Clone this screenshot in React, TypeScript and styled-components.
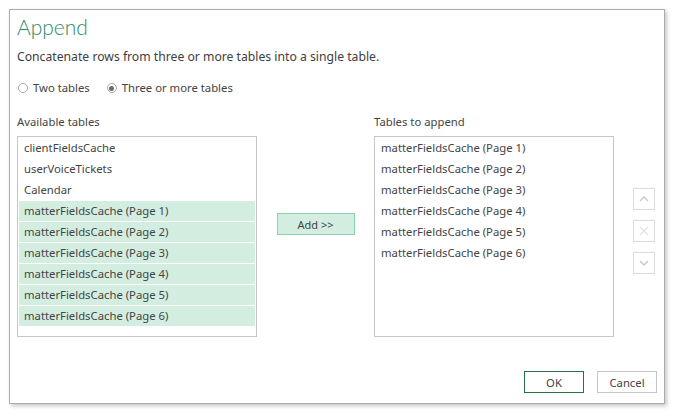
import React, { useState } from "react";
import styled, { createGlobalStyle } from "styled-components";

const GlobalStyle = createGlobalStyle`
  html, body {
    margin: 0;
    padding: 0;
    background: #ffffff;
  }
  body {
    font-family: "Noto Sans", "Open Sans", sans-serif;
    color: #444444;
  }
`;

const Page = styled.div`
  width: 675px;
  height: 413px;
  padding: 9px 0 0 9px;
  box-sizing: border-box;
`;

const Dialog = styled.div`
  width: 656px;
  height: 395px;
  box-sizing: border-box;
  border: 1px solid #ababab;
  box-shadow: 2px 2px 4px rgba(0, 0, 0, 0.22);
  background: #fff;
  padding: 3px 7px 10px 7px;
  display: flex;
  flex-direction: column;
`;

const Title = styled.h1`
  margin: 0;
  font-family: "Lato", "Noto Sans", sans-serif;
  font-weight: 300;
  font-size: 21px;
  line-height: 28px;
  color: #2f8a68;
`;

const Description = styled.p`
  margin: 8px 0 0 0;
  font-size: 12.2px;
  line-height: 16px;
  color: #404040;
`;

const RadioRow = styled.div`
  display: flex;
  gap: 16px;
  margin-top: 15px;
  height: 16px;
  align-items: center;
`;

const RadioLabel = styled.label`
  display: flex;
  align-items: center;
  gap: 5px;
  font-size: 11.3px;
  line-height: 16px;
  color: #444;
  cursor: pointer;
`;

const RadioDot = styled.span<{ checked: boolean }>`
  width: 10px;
  height: 10px;
  border-radius: 50%;
  border: 1px solid #a8a8a8;
  box-sizing: border-box;
  position: relative;
  margin-left: 1px;
  &::after {
    content: "";
    display: ${({ checked }) => (checked ? "block" : "none")};
    position: absolute;
    left: 1.5px;
    top: 1.5px;
    width: 5px;
    height: 5px;
    border-radius: 50%;
    background: #6a6a6a;
  }
`;

const Columns = styled.div`
  display: flex;
  margin-top: 18px;
  align-items: flex-start;
`;

const Column = styled.div`
  display: flex;
  flex-direction: column;
  gap: 6px;
`;

const ColumnLabel = styled.div`
  font-size: 11.3px;
  line-height: 16px;
  color: #444;
`;

const ListBox = styled.div`
  width: 240px;
  height: 201px;
  box-sizing: border-box;
  border: 1px solid #c6c6c6;
  padding: 1px;
  display: flex;
  flex-direction: column;
`;

const ListItem = styled.div<{ selected?: boolean }>`
  height: 20px;
  margin-bottom: 1px;
  line-height: 20px;
  padding-left: 5px;
  font-size: 11.3px;
  color: #444;
  background: ${({ selected }) => (selected ? "#d3eee0" : "transparent")};
  white-space: nowrap;
`;

const Middle = styled.div`
  width: 117px;
  padding-top: 99px;
  display: flex;
  justify-content: center;
`;

const AddButton = styled.button`
  width: 78px;
  height: 22px;
  box-sizing: border-box;
  border: 1px solid #8fd4b0;
  background: #d3eee0;
  color: #444;
  font-family: inherit;
  font-size: 11px;
  padding: 0;
  cursor: pointer;
`;

const SideButtons = styled.div`
  display: flex;
  flex-direction: column;
  gap: 10px;
  margin-left: 19px;
  padding-top: 74px;
`;

const IconButton = styled.button`
  width: 22px;
  height: 22px;
  box-sizing: border-box;
  border: 1px solid #dcdcdc;
  background: #fff;
  padding: 0;
  display: flex;
  align-items: center;
  justify-content: center;
`;

const Footer = styled.div`
  margin-top: auto;
  display: flex;
  justify-content: flex-end;
  gap: 13px;
`;

const FooterButton = styled.button<{ primary?: boolean }>`
  width: 60px;
  height: 22px;
  box-sizing: border-box;
  background: #fff;
  border: 1px solid ${({ primary }) => (primary ? "#217346" : "#c6c6c6")};
  color: #444;
  font-family: inherit;
  font-size: 11.3px;
  padding: 0;
`;

const available = ["clientFieldsCache", "userVoiceTickets", "Calendar"];
const pages = [1, 2, 3, 4, 5, 6].map((n) => `matterFieldsCache (Page ${n})`);

export default function App() {
  const [mode, setMode] = useState("three");

  return (
    <Page>
      <GlobalStyle />
      <Dialog>
        <Title>Append</Title>
        <Description>
          Concatenate rows from three or more tables into a single table.
        </Description>
        <RadioRow>
          <RadioLabel onClick={() => setMode("two")}>
            <RadioDot checked={mode === "two"} />
            Two tables
          </RadioLabel>
          <RadioLabel onClick={() => setMode("three")}>
            <RadioDot checked={mode === "three"} />
            Three or more tables
          </RadioLabel>
        </RadioRow>
        <Columns>
          <Column>
            <ColumnLabel>Available tables</ColumnLabel>
            <ListBox>
              {available.map((t) => (
                <ListItem key={t}>{t}</ListItem>
              ))}
              {pages.map((t) => (
                <ListItem key={t} selected>
                  {t}
                </ListItem>
              ))}
            </ListBox>
          </Column>
          <Middle>
            <AddButton>Add &gt;&gt;</AddButton>
          </Middle>
          <Column>
            <ColumnLabel>Tables to append</ColumnLabel>
            <ListBox>
              {pages.map((t) => (
                <ListItem key={t}>{t}</ListItem>
              ))}
            </ListBox>
          </Column>
          <SideButtons>
            <IconButton>
              <svg width="10" height="6" viewBox="0 0 10 6">
                <path d="M1 5 L5 1 L9 5" fill="none" stroke="#c8c8c8" strokeWidth="1.3" />
              </svg>
            </IconButton>
            <IconButton>
              <svg width="10" height="10" viewBox="0 0 10 10">
                <path d="M1 1 L9 9 M9 1 L1 9" fill="none" stroke="#e2e2e2" strokeWidth="1.2" />
              </svg>
            </IconButton>
            <IconButton>
              <svg width="10" height="6" viewBox="0 0 10 6">
                <path d="M1 1 L5 5 L9 1" fill="none" stroke="#c8c8c8" strokeWidth="1.3" />
              </svg>
            </IconButton>
          </SideButtons>
        </Columns>
        <Footer>
          <FooterButton primary>OK</FooterButton>
          <FooterButton>Cancel</FooterButton>
        </Footer>
      </Dialog>
    </Page>
  );
}
